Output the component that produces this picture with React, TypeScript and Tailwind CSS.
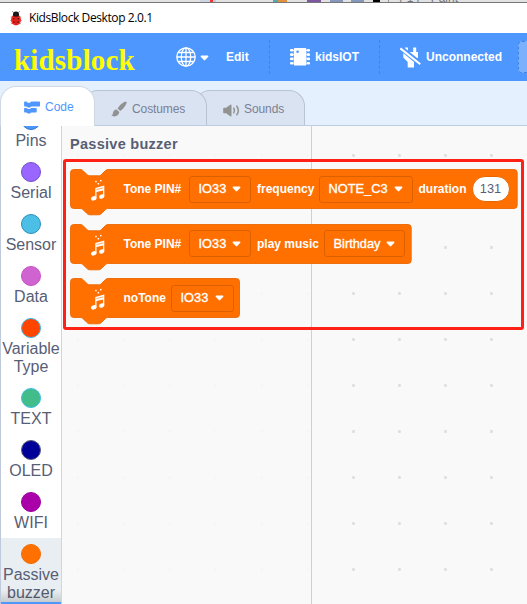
import React from "react";

const categories = [
  { lines: ["Pins"], fill: "#4c97ff", ring: "#3373cc" },
  { lines: ["Serial"], fill: "#9966ff", ring: "#774dcb" },
  { lines: ["Sensor"], fill: "#4cbfe6", ring: "#2e8eb8" },
  { lines: ["Data"], fill: "#cf63cf", ring: "#c94fc9" },
  { lines: ["Variable", "Type"], fill: "#ff4500", ring: "#3bb5f0" },
  { lines: ["TEXT"], fill: "#42bd89", ring: "#3bbde8" },
  { lines: ["OLED"], fill: "#000099", ring: "#5a5a78" },
  { lines: ["WIFI"], fill: "#aa00aa", ring: "#9a009a" },
  { lines: ["Passive", "buzzer"], fill: "#ff7000", ring: "#f56b00", selected: true },
];

function Ladybug() {
  return (
    <svg width="12" height="15" viewBox="0 0 12 15">
      <path d="M3.5 1.5 L2.5 0.4 M8.5 1.5 L9.5 0.4" stroke="#333" strokeWidth="0.8" />
      <path d="M0.5 6 L11.5 6 M0.2 9.5 H11.8 M1 12.5 H11" stroke="#777" strokeWidth="0.6" />
      <circle cx="6" cy="3.6" r="3" fill="#16161c" />
      <ellipse cx="6" cy="8.9" rx="5" ry="5.4" fill="#f0251f" />
      <path d="M2.4 5 Q6 1.7 9.6 5 Q6 6.3 2.4 5Z" fill="#16161c" />
      <path d="M6 5 V14.2" stroke="#901414" strokeWidth="0.6" />
      <g fill="#3a0808">
        <circle cx="3.7" cy="7.7" r="0.8" />
        <circle cx="8.3" cy="7.7" r="0.8" />
        <circle cx="3.9" cy="11" r="0.8" />
        <circle cx="8.1" cy="11" r="0.8" />
      </g>
    </svg>
  );
}

function Globe() {
  return (
    <svg width="20" height="20" viewBox="0 0 20 20" fill="none" stroke="#fff" strokeWidth="1.3" className="shrink-0">
      <circle cx="10" cy="10" r="9.2" />
      <ellipse cx="10" cy="10" rx="4.7" ry="9.2" />
      <path d="M10 1V19M1 10H19M2.4 5.5H17.6M2.4 14.5H17.6" />
    </svg>
  );
}

function Caret({ className = "" }: { className?: string }) {
  return (
    <svg width="9" height="6" viewBox="0 0 9 6" className={`shrink-0 ${className}`}>
      <path d="M1.1 0.5H7.9Q9 1 8.1 2L5.2 5.1Q4.5 5.8 3.8 5.1L0.9 2Q0 1 1.1 0.5Z" fill="#fff" />
    </svg>
  );
}

function Chip() {
  return (
    <svg width="20" height="20" viewBox="0 0 20 20">
      <rect x="3.8" y="1" width="12.6" height="17.6" rx="1.2" fill="#fff" />
      <g fill="#fff">
        <rect x="0" y="2" width="3.3" height="2.6" rx="1" />
        <rect x="0" y="6.3" width="3.3" height="2.6" rx="1" />
        <rect x="0" y="10.6" width="3.3" height="2.6" rx="1" />
        <rect x="0" y="14.9" width="3.3" height="2.6" rx="1" />
        <rect x="16.9" y="2" width="3.1" height="2.6" rx="1" />
        <rect x="16.9" y="6.3" width="3.1" height="2.6" rx="1" />
        <rect x="16.9" y="10.6" width="3.1" height="2.6" rx="1" />
        <rect x="16.9" y="14.9" width="3.1" height="2.6" rx="1" />
        <path d="M2 3H5V3.8H2ZM2 7.2H5V8H2ZM2 11.5H5V12.3H2ZM2 15.8H5V16.6H2ZM15 3H18V3.8H15ZM15 7.2H18V8H15ZM15 11.5H18V12.3H15ZM15 15.8H18V16.6H15Z" />
      </g>
      <circle cx="7.6" cy="4.8" r="1.3" fill="#4d97ff" />
    </svg>
  );
}

function Unplugged() {
  return (
    <svg width="21" height="21" viewBox="0 0 21 21">
      <g fill="#fff">
        <path d="M5 0.4H8V5.5H5ZM13.2 0.4H16.2V5.5H13.2Z" />
        <path d="M3.3 5H18V10.5L14 15V20.4H7.7V15L3.3 10.5Z" />
      </g>
      <path d="M0 0.4L20.5 17" stroke="#4d97ff" strokeWidth="5" />
      <path d="M0.3 1.4L20.3 17.2" stroke="#fff" strokeWidth="2.1" />
    </svg>
  );
}

function CodeIcon() {
  return (
    <svg width="16" height="13" viewBox="0 0 16 13" fill="#4d97ff">
      <path d="M.8.6H2.5L3.7 1.7H6L7.2.6H15.3Q16 .6 16 1.3V4.8Q16 5.5 15.3 5.5H7.2L6 6.6H3.7L2.5 5.5H.8Q.1 5.5.1 4.8V1.3Q.1.6.8.6Z" />
      <path d="M.8 6.9H2.5L3.7 8H6L7.2 6.9H12Q12.7 6.9 12.7 7.6V10.8Q12.7 11.5 12 11.5H7.2L6 12.6H3.7L2.5 11.5H.8Q.1 11.5.1 10.8V7.6Q.1 6.9.8 6.9Z" />
    </svg>
  );
}

function Brush() {
  return (
    <svg width="16" height="16" viewBox="0 0 16 16" fill="#929292">
      <path d="M14.7.5C15.8.6 15.8 1.7 15.3 2.8C14 5.8 11.5 8.7 9.2 10L6.6 7.6C8.2 4.8 11.4 1.4 14.7.5Z" />
      <path d="M5.7 8.5L8.3 11C8 14.5 4 16.7.2 14.6C1.2 14.3 1.8 13.5 1.9 12.2C2.1 9.9 3.8 8.4 5.7 8.5Z" />
    </svg>
  );
}

function Speaker() {
  return (
    <svg width="17" height="13" viewBox="0 0 17 13">
      <path d="M0.9 3.8H3.2L7.2.7Q8.5.1 8.5 1.4V11.6Q8.5 12.9 7.2 12.3L3.2 9.2H.9Q.2 9.2.2 8.4V4.6Q.2 3.8.9 3.8Z" fill="#929292" />
      <path d="M10.7 4.2Q12.1 6.5 10.7 8.8M13.8 2.2Q16.9 6.5 13.8 10.8" fill="none" stroke="#929292" strokeWidth="1.5" strokeLinecap="round" />
    </svg>
  );
}

function Notes() {
  return (
    <svg width="16" height="24" viewBox="0 0 16 24" fill="#fff">
      <rect x="5.2" y="1.8" width="1.5" height="1.5" />
      <rect x="7.6" y="4" width="1.5" height="1.5" />
      <rect x="10" y="0.9" width="1.5" height="1.5" />
      <path d="M5.3 9L14.3 6.6V17.5H13.1V11.4L6.5 13.1V19.5H5.3Z" />
      <path d="M6.5 10.6L13.1 8.9" stroke="#ff7000" strokeWidth="0.6" />
      <ellipse cx="3.7" cy="19.4" rx="2.8" ry="2.1" transform="rotate(-20 3.7 19.4)" />
      <ellipse cx="11.7" cy="17.5" rx="2.7" ry="2" transform="rotate(-20 11.7 17.5)" />
    </svg>
  );
}

function Block({ width, children }: { width: number; children: React.ReactNode }) {
  const r = width - 0.5;
  return (
    <div className="relative h-[54.5px]" style={{ width }}>
      <svg width={width} height="47" className="absolute left-0 top-0">
        <path
          d={`M.5 3.7A3.2 3.2 0 0 1 3.7.5H10c1.8 0 2.6.7 3.4 1.5l3.3 3.3c.8.8 1.6 1.5 3.2 1.5h8.6c1.6 0 2.4-.7 3.2-1.5l3.3-3.3C35.8 1.2 36.6.5 38.2.5H${r - 3.2}A3.2 3.2 0 0 1 ${r} 3.7V36.3A3.2 3.2 0 0 1 ${r - 3.2} 39.5H38.2c-1.6 0-2.4.7-3.2 1.5l-3.3 3.3c-.8.8-1.6 1.5-3.2 1.5h-8.6c-1.6 0-2.4-.7-3.2-1.5L13.4 41c-.8-.8-1.6-1.5-3.4-1.5H3.7A3.2 3.2 0 0 1 .5 36.3Z`}
          fill="#ff7000"
          stroke="#ec6800"
          strokeWidth="0.9"
        />
      </svg>
      <div className="relative flex h-10 items-center">
        <div className="ml-[19.5px] mr-[18px] mt-1 flex w-4 shrink-0">
          <Notes />
        </div>
        {children}
      </div>
    </div>
  );
}

function Label({ width, children }: { width: number; children: string }) {
  return (
    <span className="shrink-0 whitespace-nowrap text-[12px] leading-4 font-bold text-white" style={{ width }}>
      {children}
    </span>
  );
}

function Field({ width, children }: { width: number; children: string }) {
  return (
    <span
      className="flex h-[27px] shrink-0 items-center justify-between rounded-[3px] border border-[#db6000] pl-[8.5px] pr-[9px] text-[12.8px] leading-4 text-white [-webkit-text-stroke:0.35px_white]"
      style={{ width }}
    >
      {children}
      <Caret />
    </span>
  );
}

export default function App() {
  return (
    <div className="flex h-[604px] w-[527px] flex-col overflow-hidden bg-white font-['Liberation_Sans',Arial,sans-serif]">
      <div className="flex h-[3px] shrink-0 items-start overflow-hidden border-b border-[#777] bg-[#e2e2e2]">
        <div className="ml-[200px] h-0.5 w-[10px] bg-[#ccd5e1]" />
        <div className="h-0.5 w-[3px] bg-[#ee3434]" />
        <div className="h-0.5 w-[3px] bg-[#c7cdd5]" />
        <div className="ml-[57px] h-0.5 w-[5px] bg-[#54a9ae]" />
        <div className="h-0.5 w-[9px] bg-[#e0913e]" />
        <div className="ml-[20px] h-0.5 w-[14px] bg-[#7d58a0]" />
        <div className="ml-[9px] h-0.5 w-[13px] bg-[#8597ba]" />
        <div className="ml-[8px] h-0.5 w-[13px] bg-[#8597ba]" />
        <div className="ml-[9px] h-0.5 w-[7px] bg-black" />
        <div className="ml-[8px] h-0.5 w-px bg-[#999]" />
        <span className="ml-[7px] -mt-[9px] whitespace-nowrap text-[12px] leading-[14px] text-[#777]">4-14 - Paint</span>
      </div>

      <header className="flex h-[30px] shrink-0 items-center bg-white pl-[10px]">
        <Ladybug />
        <span className="ml-[7px] font-['Open_Sans','Noto_Sans',sans-serif] text-[12px] tracking-[-0.4px] text-black">KidsBlock Desktop 2.0.1</span>
      </header>

      <nav className="flex h-12 shrink-0 items-center bg-[#4d97ff] text-[12px] font-bold text-white">
        <span className="mt-[5px] ml-[14px] w-[162px] shrink-0 font-['Liberation_Serif',serif] text-[29px] leading-8 tracking-[0.18px] text-[#ffff00]">kidsblock</span>
        <Globe />
        <Caret className="ml-[4px] mt-px" />
        <span className="ml-[17px] w-[43px] shrink-0">Edit</span>
        <div className="h-[34px] shrink-0 border-l border-dashed border-[#3f83e3]" />
        <div className="ml-[20px] mr-[5px] shrink-0"><Chip /></div>
        <span className="w-[64px] shrink-0">kidsIOT</span>
        <div className="h-[34px] shrink-0 border-l border-dashed border-[#3f83e3]" />
        <div className="ml-[20px] mr-[5px] shrink-0"><Unplugged /></div>
        <span className="w-[92px] shrink-0">Unconnected</span>
        <div className="h-8 w-12 shrink-0 rounded-[4px] border border-dashed border-[#3f83e3] bg-[#7ab1ff]" />
      </nav>

      <div className="flex h-[45px] shrink-0 items-end border-b border-[#c0cde0] bg-[#e5f0ff] text-[12px]">
        <div className="z-20 -mb-px flex h-10 w-[95px] shrink-0 items-center rounded-t-[16px] border border-b-0 border-[#d0d8e4] bg-white pl-[23px] pt-[2px] text-[#4d97ff]">
          <CodeIcon />
          <span className="ml-[5px] -mt-px">Code</span>
        </div>
        <div className="z-10 -ml-[13px] flex h-[35px] w-[125px] shrink-0 items-center rounded-t-[16px] border border-b-0 border-[#b9c3d4] bg-[#d9e3f2] pl-[28px] pt-[1px] text-[#7a8092]">
          <Brush />
          <span className="ml-[5px] tracking-[-0.1px]">Costumes</span>
        </div>
        <div className="-ml-[13px] flex h-[35px] w-[111px] shrink-0 items-center rounded-t-[16px] border border-b-0 border-[#b9c3d4] bg-[#d9e3f2] pl-[28px] pt-[1px] text-[#7a8092]">
          <span className="mt-[3px] flex"><Speaker /></span>
          <span className="ml-[4px] tracking-[-0.1px]">Sounds</span>
        </div>
      </div>

      <main className="relative flex min-h-0 flex-1">
        <aside className="relative flex w-[62px] shrink-0 flex-col overflow-hidden border-x border-l-[#bfcbdc] border-r-[#d5d5d5] bg-white">
          <div className="-mt-[22px] flex flex-col">
            {categories.map((c) => (
              <div key={c.lines[0]} className={c.selected ? "flex flex-col items-center bg-[#e9eef2] py-[6px]" : "flex flex-col items-center py-[6px]"}>
                <div className="mb-[2px] size-5 shrink-0 rounded-full border" style={{ backgroundColor: c.fill, borderColor: c.ring }} />
                {c.lines.map((l) => (
                  <span key={l} className="h-[18px] text-[16px] leading-[18px] text-[#575e75]">{l}</span>
                ))}
              </div>
            ))}
          </div>
          <div className="absolute -inset-x-px bottom-0 h-[14px] border-b-2 border-[#4d97ff] bg-linear-to-b from-transparent to-black/15" />
        </aside>

        <section className="relative min-w-0 flex-1 bg-[#f9f9f9]">
          <svg className="absolute inset-0" width="465" height="478">
            <defs>
              <pattern id="dots" x="-8" y="6" width="46" height="46" patternUnits="userSpaceOnUse">
                <rect x="22" y="22.5" width="3" height="2" fill="#e3e3e3" />
                <rect x="22.6" y="22" width="1.8" height="3" fill="#dedede" />
              </pattern>
            </defs>
            <rect width="465" height="478" fill="url(#dots)" />
            <rect width="249" height="478" fill="#f9f9f9" fillOpacity="0.86" />
            <path d="M249.5 0V478" stroke="#d0d0d0" />
          </svg>
          <div className="relative pl-2 pt-[9px]">
            <h2 className="h-[34px] text-[14.5px] leading-[18px] font-bold tracking-[0.28px] text-[#575e75]">Passive buzzer</h2>
            <Block width={447.7}>
              <Label width={65.5}>Tone PIN#</Label>
              <Field width={62}>IO33</Field>
              <span className="w-[6px] shrink-0" />
              <Label width={62}>frequency</Label>
              <Field width={93.5}>NOTE_C3</Field>
              <span className="w-[6px] shrink-0" />
              <Label width={53}>duration</Label>
              <span className="flex h-[26px] w-[38px] shrink-0 items-center justify-center rounded-full border border-[#e86600] bg-white text-[12.8px] text-[#575e75]">131</span>
            </Block>
            <Block width={341.7}>
              <Label width={65.5}>Tone PIN#</Label>
              <Field width={62}>IO33</Field>
              <span className="w-[6px] shrink-0" />
              <Label width={67}>play music</Label>
              <Field width={81}>Birthday</Field>
            </Block>
            <Block width={170}>
              <Label width={47.5}>noTone</Label>
              <Field width={62.5}>IO33</Field>
            </Block>
          </div>
          <div className="pointer-events-none absolute left-[0.5px] top-[32.5px] h-[171px] w-[461px] rounded-[3px] border-[3px] border-[#ff2116]" />
        </section>
      </main>
    </div>
  );
}
